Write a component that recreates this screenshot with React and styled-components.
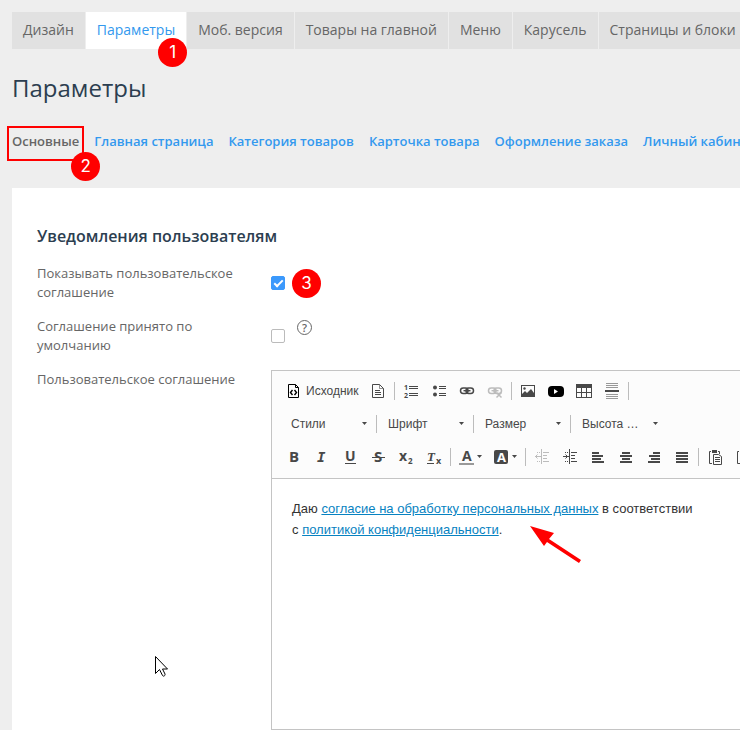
import { useState } from "react";
import styled, { createGlobalStyle, css } from "styled-components";

const mainTabs = [
  "Дизайн",
  "Параметры",
  "Моб. версия",
  "Товары на главной",
  "Меню",
  "Карусель",
  "Страницы и блоки",
];

const subTabs = [
  "Основные",
  "Главная страница",
  "Категория товаров",
  "Карточка товара",
  "Оформление заказа",
  "Личный кабинет",
];

const combos = ["Стили", "Шрифт", "Размер", "Высота …"];

const Icon = ({ children, ...props }) => (
  <svg
    width="16"
    height="16"
    viewBox="0 0 16 16"
    fill="none"
    stroke="#484848"
    overflow="visible"
    aria-hidden="true"
    {...props}
  >
    {children}
  </svg>
);

const Letter = (props) => (
  <text fill="#484848" stroke="none" fontFamily="Open Sans, sans-serif" fontWeight="700" {...props} />
);

const SourceIcon = () => (
  <Icon stroke="#000">
    <path d="M2.5 1.5h7l3 3v10h-10z" />
    <path d="M9.5 1.5v3h3" />
    <path d="M6.5 7L4.500 9.500l2 2.500M8.500 7l2 2.500-2 2.500" strokeWidth="1.4" />
  </Icon>
);

const PageIcon = () => (
  <Icon>
    <path d="M2.5 1.5h7l4 4v9h-11z" />
    <path d="M9.5 1.5v4h4" strokeWidth="0.6" />
    <path d="M5 7.5h5M5 9.5h6M5 11.5h6" />
  </Icon>
);

const NumberedIcon = () => (
  <Icon>
    <Letter x="1" y="7" fontSize="7">1</Letter>
    <Letter x="1" y="15" fontSize="7">2</Letter>
    <path d="M6 3.5h9M6 5.5h9M6 10.5h9M6 12.5h9" />
  </Icon>
);

const BulletIcon = () => (
  <Icon>
    <circle cx="4" cy="4.5" r="2" fill="#484848" stroke="none" />
    <circle cx="4" cy="11.5" r="2" fill="#484848" stroke="none" />
    <path d="M8 3.5h7M8 5.5h7M8 10.5h7M8 12.5h7" />
  </Icon>
);

const Chain = () => (
  <>
    <rect x="1.5" y="5" width="7.5" height="5.5" rx="2.7" strokeWidth="1.5" />
    <rect x="7" y="5" width="7.5" height="5.5" rx="2.7" strokeWidth="1.5" />
    <path d="M4.5 7.7h7" strokeWidth="1.4" />
  </>
);

const LinkIcon = () => (
  <Icon>
    <Chain />
  </Icon>
);

const UnlinkIcon = () => (
  <Icon opacity="0.35">
    <Chain />
    <path d="M9.5 9.500l5 5M14.500 9.500l-5 5" strokeWidth="1.5" />
  </Icon>
);

const PictureIcon = () => (
  <Icon>
    <rect x="1.5" y="2.5" width="13" height="11" />
    <circle cx="4.5" cy="5.5" r="1.2" fill="#484848" stroke="none" />
    <path d="M2 13v-2l3-3 2 2 4-4 3 4v3z" fill="#484848" stroke="none" />
  </Icon>
);

const VideoIcon = () => (
  <Icon stroke="none">
    <rect x="0" y="3" width="16" height="11" rx="4" fill="#000" />
    <path d="M6 6v5l4-2.500z" fill="#fff" />
  </Icon>
);

const TableIcon = () => (
  <Icon>
    <rect x="0.5" y="1.5" width="15" height="13" />
    <path d="M0 1h16v4H0z" fill="#484848" stroke="none" />
    <path d="M5.5 5v9M10.5 5v9M1 9.5h14" />
  </Icon>
);

const RuleIcon = () => (
  <Icon>
    <path d="M2 0.5h12M2 2.5h12M2 4.5h12M2 11.5h12M2 13.5h12M2 15.5h12" stroke="#999" />
    <path d="M1 8h14" strokeWidth="2" />
  </Icon>
);

const OutdentIcon = () => (
  <Icon opacity="0.35">
    <path d="M7.5 0v15M9 3.5h6M9 6.5h4M9 9.5h4M9 12.5h6" />
    <path d="M3 3.5h1M5 3.5h1M3 12.5h1M5 12.5h1M1 7.5h6M3.5 5.5l-2 2 2 2" />
  </Icon>
);

const IndentIcon = () => (
  <Icon>
    <path d="M7.5 0v15M9 3.5h6M9 6.5h4M9 9.5h4M9 12.5h6" />
    <path d="M3 3.5h1M5 3.5h1M3 12.5h1M5 12.5h1M1 7.5h6M3.500 5.5l2 2-2 2" />
  </Icon>
);

const AlignIcon = ({ d }) => (
  <Icon>
    <path d={d} strokeWidth="2" />
  </Icon>
);

const PasteIcon = () => (
  <Icon>
    <path d="M4 2.5H2.5v12H5M11 2.5h1.500V5" />
    <path d="M5 1h5v3H5z" fill="#484848" stroke="none" />
    <path d="M6.5 5.5h5l3 2v8h-8z" fill="#fcfcfc" />
    <path d="M8 8.5h5M8 10.5h5M8 12.5h5" />
  </Icon>
);

const BoldIcon = () => (
  <Icon>
    <Letter x="3" y="13" fontSize="15">B</Letter>
  </Icon>
);

const ItalicIcon = () => (
  <Icon>
    <Letter x="3" y="13" fontSize="14" fontStyle="italic" fontFamily="DejaVu Sans Mono, monospace">I</Letter>
  </Icon>
);

const UnderlineIcon = () => (
  <Icon>
    <Letter x="3" y="12" fontSize="14">U</Letter>
    <path d="M3 14.5h11" />
  </Icon>
);

const StrikeIcon = () => (
  <Icon>
    <Letter x="4" y="13" fontSize="15">S</Letter>
    <path d="M2 8.5h13" />
  </Icon>
);

const SubscriptIcon = () => (
  <Icon>
    <Letter x="1" y="12" fontSize="14">x</Letter>
    <Letter x="10" y="15" fontSize="8">2</Letter>
  </Icon>
);

const ClearFormatIcon = () => (
  <Icon>
    <Letter x="1" y="12" fontSize="13" fontStyle="italic" fontFamily="Liberation Serif, serif">T</Letter>
    <Letter x="10" y="15" fontSize="9">x</Letter>
    <path d="M1 14.5h7" />
  </Icon>
);

const TextColorIcon = () => (
  <Icon>
    <Letter x="3" y="12" fontSize="14">A</Letter>
    <path d="M0 15h15" stroke="#999" strokeWidth="2" />
  </Icon>
);

const FillColorIcon = () => (
  <Icon>
    <rect x="0" y="1" width="14" height="14" rx="2" fill="#484848" stroke="none" />
    <Letter x="3" y="13" fontSize="13" fill="#fff">A</Letter>
  </Icon>
);

const Caret = () => (
  <svg width="5" height="3" viewBox="0 0 5 3" aria-hidden="true">
    <path d="M0 0h5L2.5 3z" fill="#484848" />
  </svg>
);

export default function App() {
  const [showAgreement, setShowAgreement] = useState(true);
  const [accepted, setAccepted] = useState(false);

  return (
    <Page>
      <GlobalStyle />
      <MainNav>
        {mainTabs.map((name) => (
          <MainTab key={name} href="#" $active={name === "Параметры"}>
            {name}
            {name === "Параметры" && <TabMark>1</TabMark>}
          </MainTab>
        ))}
      </MainNav>

      <Title>Параметры</Title>

      <SubNav>
        {subTabs.map((name) => (
          <SubTab key={name} href="#" $active={name === "Основные"}>
            {name}
            {name === "Основные" && (
              <Frame>
                <FrameMark>2</FrameMark>
              </Frame>
            )}
          </SubTab>
        ))}
      </SubNav>

      <Panel>
        <SectionTitle>Уведомления пользователям</SectionTitle>
        <Form>
          <Row>
            <Label htmlFor="show">Показывать пользовательское соглашение</Label>
            <Field>
              <Checkbox id="show" checked={showAgreement} onChange={(e) => setShowAgreement(e.target.checked)} />
              <CheckMark>3</CheckMark>
            </Field>
          </Row>
          <Row>
            <Label htmlFor="accepted">Соглашение принято по умолчанию</Label>
            <Field>
              <Checkbox id="accepted" checked={accepted} onChange={(e) => setAccepted(e.target.checked)} />
              <Help type="button" aria-label="Справка">?</Help>
            </Field>
          </Row>
          <Row>
            <Label as="span" id="agreement">Пользовательское соглашение</Label>
            <Editor>
              <Toolbar>
                <ToolRow>
                  <Tool type="button">
                    <SourceIcon />
                    <ToolText>Исходник</ToolText>
                  </Tool>
                  <Tool type="button" aria-label="Новая страница"><PageIcon /></Tool>
                  <Divider />
                  <Tool type="button" aria-label="Нумерованный список"><NumberedIcon /></Tool>
                  <Tool type="button" aria-label="Маркированный список"><BulletIcon /></Tool>
                  <Tool type="button" aria-label="Ссылка"><LinkIcon /></Tool>
                  <Tool type="button" aria-label="Убрать ссылку" disabled><UnlinkIcon /></Tool>
                  <Divider />
                  <Tool type="button" aria-label="Изображение"><PictureIcon /></Tool>
                  <Tool type="button" aria-label="Видео"><VideoIcon /></Tool>
                  <Tool type="button" aria-label="Таблица"><TableIcon /></Tool>
                  <Tool type="button" aria-label="Горизонтальная линия"><RuleIcon /></Tool>
                  <Divider />
                </ToolRow>
                <ComboRow>
                  {combos.map((name, i) => (
                    <ComboGroup key={name}>
                      <Combo>
                        <select aria-label={name}>
                          <option>{name}</option>
                        </select>
                        <Caret />
                      </Combo>
                      {i < combos.length - 1 && <Divider />}
                    </ComboGroup>
                  ))}
                </ComboRow>
                <ToolRow>
                  <Tool type="button" aria-label="Полужирный"><BoldIcon /></Tool>
                  <Tool type="button" aria-label="Курсив"><ItalicIcon /></Tool>
                  <Tool type="button" aria-label="Подчеркнутый"><UnderlineIcon /></Tool>
                  <Tool type="button" aria-label="Зачеркнутый"><StrikeIcon /></Tool>
                  <Tool type="button" aria-label="Подстрочный индекс"><SubscriptIcon /></Tool>
                  <Tool type="button" aria-label="Убрать форматирование"><ClearFormatIcon /></Tool>
                  <Divider />
                  <Tool type="button" aria-label="Цвет текста"><TextColorIcon /><Caret /></Tool>
                  <Tool type="button" aria-label="Цвет фона"><FillColorIcon /><Caret /></Tool>
                  <Divider />
                  <Tool type="button" aria-label="Уменьшить отступ" disabled><OutdentIcon /></Tool>
                  <Tool type="button" aria-label="Увеличить отступ"><IndentIcon /></Tool>
                  <Tool type="button" aria-label="По левому краю"><AlignIcon d="M2 4h7M2 7h11M2 10h9M2 13h12" /></Tool>
                  <Tool type="button" aria-label="По центру"><AlignIcon d="M4 4h8M2 7h12M4 10h8M2 13h12" /></Tool>
                  <Tool type="button" aria-label="По правому краю"><AlignIcon d="M7 4h7M3 7h11M5 10h9M2 13h12" /></Tool>
                  <Tool type="button" aria-label="По ширине"><AlignIcon d="M2 4h12M2 7h12M2 10h12M2 13h12" /></Tool>
                  <Divider />
                  <Tool type="button" aria-label="Вставить"><PasteIcon /></Tool>
                  <Tool type="button" aria-label="Вставить текст"><PasteIcon /></Tool>
                </ToolRow>
              </Toolbar>
              <Content role="textbox" aria-labelledby="agreement">
                Даю <a href="#">согласие на обработку персональных данных</a> в соответствии
                <br />с <a href="#">политикой конфиденциальности</a>.
                <Arrow width="52" height="38" viewBox="0 0 52 38" aria-hidden="true">
                  <path d="M0 0l24 7-5 6 32 21-2 3-32-21-3 4z" fill="#f00" />
                </Arrow>
              </Content>
            </Editor>
          </Row>
        </Form>
      </Panel>

      <Cursor width="15" height="23" viewBox="0 0 15 23" aria-hidden="true">
        <path d="M1.5 1.5v17l4-4 3 6c1 1.5 3 0 2.5-1.5l-2.500-5h5z" fill="#fff" stroke="#000" />
      </Cursor>
    </Page>
  );
}

const GlobalStyle = createGlobalStyle`
  body {
    margin: 0;
    background: #eeeeee;
    font-family: "Open Sans", sans-serif;
    color: #666666;
    overflow-x: hidden;
  }
  a {
    text-decoration: none;
  }
`;

const Page = styled.div`
  position: relative;
  min-height: 100vh;
  box-sizing: border-box;
  padding: 12px 0 0 12px;
  display: flex;
  flex-direction: column;
  overflow: hidden;
`;

const MainNav = styled.nav`
  display: flex;
  gap: 1px;
`;

const MainTab = styled.a`
  position: relative;
  flex-shrink: 0;
  padding: 0 11px 2px;
  font-size: 14px;
  line-height: 35px;
  white-space: nowrap;
  background: ${(props) => (props.$active ? "#ffffff" : "#e1e1e1")};
  color: ${(props) => (props.$active ? "#3399ee" : "#666666")};
`;

const mark = css`
  position: absolute;
  width: 29px;
  height: 29px;
  border-radius: 50%;
  background: #ff0000;
  color: white;
  font-family: Inter, sans-serif;
  font-size: 17px;
  line-height: 29px;
  font-weight: 400;
  text-align: center;
  z-index: 1;
`;

const TabMark = styled.span`
  ${mark}
  right: -1px;
  bottom: -18px;
`;

const Title = styled.h1`
  margin: 22px 0 0;
  font-size: 24px;
  line-height: 34px;
  font-weight: 400;
  color: #2c3e50;
`;

const SubNav = styled.nav`
  display: flex;
  gap: 15px;
  margin-top: 26px;
`;

const SubTab = styled.a`
  position: relative;
  flex-shrink: 0;
  font-size: 13px;
  line-height: 20px;
  font-weight: 600;
  white-space: nowrap;
  color: ${(props) => (props.$active ? "#666666" : "#3399ee")};
`;

const Frame = styled.span`
  position: absolute;
  inset: -5px -5px -10px -5px;
  border: 2px solid #ff0000;
`;

const FrameMark = styled.span`
  ${mark}
  right: -18px;
  bottom: -22px;
`;

const Panel = styled.main`
  flex: 1;
  margin-top: 37px;
  padding: 36px 0 0 25px;
  background: white;
`;

const SectionTitle = styled.h2`
  margin: 0;
  font-size: 16px;
  line-height: 24px;
  font-weight: 600;
  color: #2c3e50;
`;

const Form = styled.form`
  display: flex;
  flex-direction: column;
  gap: 15px;
  margin-top: 16px;
`;

const Row = styled.div`
  display: flex;
`;

const Label = styled.label`
  flex-shrink: 0;
  width: 234px;
  box-sizing: border-box;
  padding-right: 20px;
  font-size: 13px;
  line-height: 19px;
`;

const Field = styled.div`
  position: relative;
  display: flex;
  align-items: flex-start;
  gap: 12px;
`;

const Checkbox = styled.input.attrs({ type: "checkbox" })`
  appearance: none;
  width: 14px;
  height: 14px;
  margin: 12px 0 0;
  border: 1px solid #bbbbbb;
  border-radius: 2px;
  background: white;
  display: grid;
  place-content: center;
  &:checked {
    border-color: #3b99fc;
    background: #3b99fc;
  }
  &:checked::before {
    content: "";
    width: 7px;
    height: 3px;
    border: solid white;
    border-width: 0 0 2px 2px;
    transform: translateY(-1px) rotate(-45deg);
  }
`;

const CheckMark = styled.span`
  ${mark}
  left: 21px;
  top: 5px;
`;

const Help = styled.button`
  width: 15px;
  height: 15px;
  margin-top: 3px;
  padding: 0;
  border: 1px solid #666666;
  border-radius: 50%;
  background: none;
  font-family: "Open Sans", sans-serif;
  font-size: 11px;
  line-height: 13px;
  font-weight: 600;
  color: #666666;
`;

const Editor = styled.div`
  flex: 1;
  min-width: 0;
  border: 1px solid #c4c4c4;
  border-right: none;
  overflow: hidden;
`;

const Toolbar = styled.div`
  padding: 3px 0 5px 8px;
  border-bottom: 1px solid #c4c4c4;
  background: #fcfcfc;
`;

const ToolRow = styled.div`
  display: flex;
  align-items: center;
  height: 33px;
`;

const ComboRow = styled(ToolRow)`
  padding-left: 2px;
`;

const Tool = styled.button`
  flex-shrink: 0;
  display: flex;
  align-items: center;
  gap: 2px;
  height: 28px;
  padding: 0 6px;
  border: none;
  background: none;
`;

const ToolText = styled.span`
  padding-left: 2px;
  font-family: "Liberation Sans", Arial, sans-serif;
  font-size: 12px;
  color: #484848;
`;

const Divider = styled.span`
  flex-shrink: 0;
  width: 1px;
  height: 18px;
  margin: 0 2px;
  background: #bcbcbc;
`;

const ComboGroup = styled.div`
  display: flex;
  align-items: center;
`;

const Combo = styled.label`
  display: flex;
  align-items: center;
  width: 92px;
  box-sizing: border-box;
  padding: 0 7px 0 9px;
  select {
    flex: 1;
    min-width: 0;
    appearance: none;
    padding: 0;
    border: none;
    background: none;
    font-family: "Liberation Sans", Arial, sans-serif;
    font-size: 12px;
    color: #484848;
  }
`;

const Content = styled.div`
  position: relative;
  box-sizing: border-box;
  height: 250px;
  padding: 19px 20px;
  font-family: "Liberation Sans", Arial, sans-serif;
  font-size: 13px;
  line-height: 21px;
  color: #333333;
  white-space: nowrap;
  a {
    color: #0782c1;
    text-decoration: underline;
  }
`;

const Arrow = styled.svg`
  position: absolute;
  left: 258px;
  top: 47px;
`;

const Cursor = styled.svg`
  position: absolute;
  left: 154px;
  top: 655px;
`;
